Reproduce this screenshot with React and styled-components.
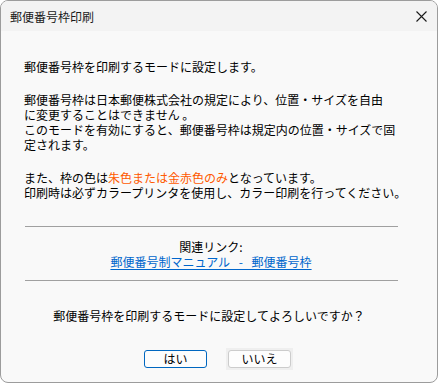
import styled, { createGlobalStyle } from 'styled-components';

const Global = createGlobalStyle`
  html, body {
    margin: 0;
    padding: 0;
    background: #ffffff;
  }
  * { box-sizing: border-box; }
`;

function App() {
    return (
        <>
            <Global />
            <Window>
                <TitleBar>
                    <span>郵便番号枠印刷</span>
                    <Close aria-label="閉じる">
                        <svg width="11" height="11" viewBox="0 0 11 11">
                            <path d="M0.5 0.5 L10.5 10.5 M10.5 0.5 L0.5 10.5" stroke="#1a1a1a" strokeWidth="1.1" fill="none" />
                        </svg>
                    </Close>
                </TitleBar>
                <Body>
                    <Para>郵便番号枠を印刷するモードに設定します。</Para>
                    <Para>
                        郵便番号枠は日本郵便株式会社の規定により、位置・サイズを自由<br />
                        に変更することはできません 。<br />
                        このモードを有効にすると、郵便番号枠は規定内の位置・サイズで固<br />
                        定されます。
                    </Para>
                    <Para>
                        また、枠の色は<Accent>朱色または金赤色のみ</Accent>となっています。<br />
                        印刷時は必ずカラープリンタを使用し、カラー印刷を行ってください。
                    </Para>
                    <Divider />
                    <LinkBlock>
                        <span>関連リンク:</span>
                        <LinkText href="#">郵便番号制マニュアル - 郵便番号枠</LinkText>
                    </LinkBlock>
                    <Divider />
                    <Question>郵便番号枠を印刷するモードに設定してよろしいですか？</Question>
                    <Buttons>
                        <Button $primary>はい</Button>
                        <ButtonWell>
                            <Button>いいえ</Button>
                        </ButtonWell>
                    </Buttons>
                </Body>
            </Window>
        </>
    )
}

export default App;

const Window = styled.div`
  width: 438px;
  height: 383px;
  border: 1px solid #9c9c9c;
  border-radius: 8px;
  overflow: hidden;
  background: #f9f9f9;
  display: flex;
  flex-direction: column;
  font-family: "Noto Sans CJK JP", "Noto Sans", sans-serif;
  font-size: 12px;
  color: #000;
`;

const TitleBar = styled.div`
  height: 30px;
  flex-shrink: 0;
  background: #f3f3f3;
  display: flex;
  align-items: center;
  justify-content: space-between;
  padding: 0 9px 0 9px;
  color: #1a1a1a;
  font-size: 12px;
`;

const Close = styled.div`
  width: 11px;
  height: 11px;
  display: flex;
  margin-right: 1px;
  svg { display: block; }
`;

const Body = styled.div`
  flex: 1;
  display: flex;
  flex-direction: column;
  padding: 28px 39px 0 23px;
`;

const Para = styled.p`
  margin: 0 0 18px;
  line-height: 15px;
  white-space: nowrap;
  &:last-of-type { margin-bottom: 0; }
`;

const Accent = styled.span`
  color: #ff5a00;
`;

const Divider = styled.hr`
  border: none;
  border-top: 1px solid #a0a0a0;
  margin: 26px 0 0 1px;
  height: 0;
`;

const LinkBlock = styled.div`
  display: flex;
  flex-direction: column;
  align-items: center;
  line-height: 15px;
  margin: 12px 0 11px;
  & + ${Divider} { margin-top: 0; }
`;

const LinkText = styled.a`
  color: #0066cc;
  text-decoration: underline;
  text-underline-offset: 2px;
  word-spacing: 6px;
`;

const Question = styled.div`
  text-align: center;
  line-height: 15px;
  margin-top: 27px;
  padding-right: 4px;
`;

const Buttons = styled.div`
  display: flex;
  justify-content: center;
  align-items: center;
  gap: 19px;
  margin-top: 25px;
  padding-left: 15px;
`;

const ButtonWell = styled.div`
  background: #efefef;
  padding: 2px;
`;

const Button = styled.button`
  width: 63px;
  height: 18px;
  padding: 0;
  border-radius: 3px;
  border: 1px solid ${p => (p.$primary ? '#0067c0' : '#cccccc')};
  background: #fdfdfd;
  font-family: "Noto Sans CJK JP", sans-serif;
  font-size: 12px;
  line-height: 16px;
  color: #000;
`;
